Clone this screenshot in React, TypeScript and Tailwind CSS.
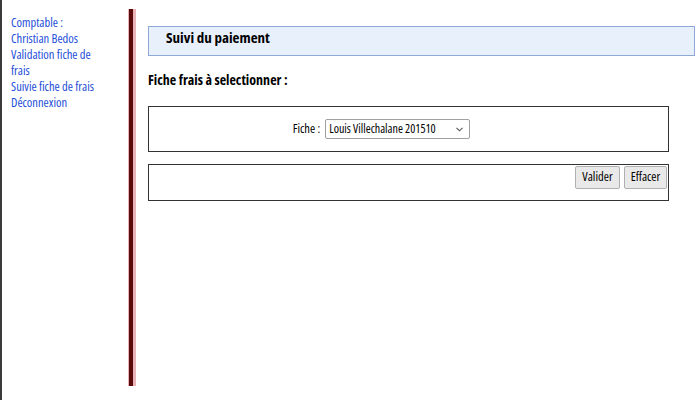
import React from 'react';

export default function App() {
  return (
    <div className="flex h-[400px] w-[700px] bg-white border-l-2 border-[#3a3a3a] text-black font-['Open_Sans',sans-serif] [font-stretch:75%]">
      {/* Menu */}
      <div className="w-[126px] shrink-0 pl-[9px] pr-[22px] pt-[15px] text-[12.5px] leading-[16px] text-[#1d4ed8]">
        <div>Comptable :</div>
        <div>Christian Bedos</div>
        <div>Validation fiche de frais</div>
        <div>Suivie fiche de frais</div>
        <div>Déconnexion</div>
      </div>

      {/* Separator */}
      <div className="mt-[9px] h-[377px] flex shrink-0">
        <div className="w-px bg-[#e8b4b8]" />
        <div className="w-[4px] bg-[#5a0a0a]" />
        <div className="w-[3px] bg-[#e8b4b8]" />
      </div>

      {/* Content */}
      <div className="flex-1 pl-[12px] pr-[5px] pt-[26px]">
        <div className="h-[30px] border border-[#8fa8d8] bg-[#e8f0fc] pl-[17px] pb-[8px] flex items-center text-[15px] font-bold">
          Suivi du paiement
        </div>
        <h2 className="mt-[14px] text-[14px] font-bold leading-[20px]">Fiche frais à selectionner :</h2>

        <div className="mt-[16px] w-[521px] h-[46px] border border-[#333] flex items-center justify-center text-[12.5px]">
          <span className="mr-[5px] ml-[-54px]">Fiche :</span>
          <div className="w-[145px] h-[20px] border border-[#a0a0a0] rounded-[2px] flex items-center justify-between pl-[3px] pr-[2px] bg-white whitespace-nowrap text-[12px]">
            <span>Louis Villechalane 201510</span>
            <svg width="7" height="5" viewBox="0 0 7 5" className="mr-[4px]">
              <path d="M0.5 0.8 L3.5 3.8 L6.5 0.8" fill="none" stroke="#555" strokeWidth="1.1" />
            </svg>
          </div>
        </div>

        <div className="mt-[12px] w-[521px] h-[37px] border border-[#333] flex justify-end items-start pt-[1px] pr-[1px] gap-[4px] text-[12.5px]">
          <button className="h-[23px] w-[45px] border border-[#b0b0b0] bg-[#e9e9e9] rounded-[2px]">Valider</button>
          <button className="h-[23px] w-[43px] border border-[#b0b0b0] bg-[#e9e9e9] rounded-[2px]">Effacer</button>
        </div>
      </div>
    </div>
  );
}
